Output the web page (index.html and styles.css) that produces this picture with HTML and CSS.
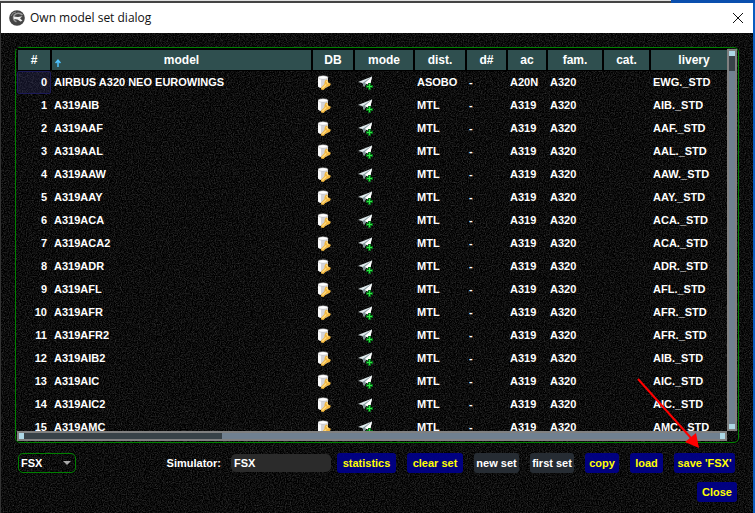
FILE: index.html
```html
<!DOCTYPE html>
<html lang="en">
<head>
<meta charset="utf-8">
<title>Own model set dialog</title>
<link rel="stylesheet" href="styles.css">
</head>
<body>
<svg class="defs" aria-hidden="true">
  <filter id="grain" x="0" y="0" width="100%" height="100%" color-interpolation-filters="sRGB">
    <feTurbulence type="fractalNoise" baseFrequency="0.83" numOctaves="4" seed="4"/>
    <feColorMatrix values="0.36 0 0 0 -0.13  0.36 0 0 0 -0.13  0.36 0 0 0 -0.13  0 0 0 0 1"/>
  </filter>
  <symbol id="db" viewBox="0 0 15 15">
    <path d="M0 2.500v8.500c0 1.200 2 2 5 2s5-.8 5-2V2.500z" fill="#d4d4d8"/>
    <path d="M0 3v8c0 .8 1.200 1.500 3 1.800V4z" fill="#fafafa"/>
    <ellipse cx="5" cy="2.500" rx="4.900" ry="1.800" fill="#fff" stroke="#aaa" stroke-width=".5"/>
    <path d="M3 12.800l3.500-3.800c-.3-2 .6-3.900 2-4.400l1.300.9v1.700l3 1.600c-.2 2.100-2 3.300-4.100 3L5.500 14.900l-2.500-.4z" fill="#f2b73f"/>
    <path d="M4.300 13.300l4-4M8.500 6l1.700 2.700" stroke="#ffe08a" stroke-width="1.200" fill="none"/>
  </symbol>
  <symbol id="plane" viewBox="0 0 15 15">
    <path d="M0 7L14 1.500 12 10 8 8.500 6 12 4.500 8z" fill="#dfeaec"/>
    <path d="M4.500 8L14 1.500 6 12z" fill="#84979c"/>
    <path d="M6.800 8L14 1.500 12 10.500z" fill="#fff"/>
    <path d="M11.500 8v7M8 11.500h7" stroke="#067018" stroke-width="3"/>
    <path d="M11.500 9v5M9 11.500h5" stroke="#2fe845" stroke-width="1"/>
  </symbol>
</svg>
<div class="desktop"><span></span></div>
<main class="window">
  <header class="titlebar">
    <svg class="logo" viewBox="0 0 16 16" aria-hidden="true">
      <circle cx="8" cy="8" r="7.800" fill="#444"/>
      <path d="M13.500 5C11 2.500 7 2.800 5.200 5.300c-1.600 2.400-.6 5.400 2.300 6.500" fill="none" stroke="#999" stroke-width="1.500"/>
      <path d="M4.500 6.500L9 7l4.500-.8-2.500 2 2.500 2.500-2 .8L8.500 9.500 5 9z" fill="#eee"/>
      <path d="M2 6l2-3 3-1" stroke="#888" fill="none"/>
    </svg>
    <h1>Own model set dialog</h1>
    <button class="close-x" aria-label="Close window"><svg viewBox="0 0 10 10" aria-hidden="true"><path d="M0 0l10 10M10 0L0 10"/></svg></button>
  </header>
  <div class="content">
    <svg class="grain" aria-hidden="true"><rect width="100%" height="100%" filter="url(#grain)"/></svg>
    <section class="panel">
      <div class="viewport">
        <table>
          <colgroup><col class="c-num"><col><col class="c-db"><col class="c-mode"><col class="c-dist"><col class="c-dn"><col class="c-ac"><col class="c-fam"><col class="c-cat"><col class="c-liv"></colgroup>
          <thead><tr><th>#</th><th class="sorted"><svg viewBox="0 0 6 8" aria-hidden="true"><path d="M3 8V2M.5 4L3 1.200 5.500 4"/></svg>model</th><th>DB</th><th>mode</th><th>dist.</th><th>d#</th><th>ac</th><th>fam.</th><th>cat.</th><th>livery</th></tr></thead>
          <tbody>
            <tr><td class="current">0</td><td>AIRBUS A320 NEO EUROWINGS</td><td><svg><use href="#db"/></svg></td><td><svg><use href="#plane"/></svg></td><td>ASOBO</td><td>-</td><td>A20N</td><td>A320</td><td></td><td>EWG._STD</td></tr>
            <tr><td>1</td><td>A319AIB</td><td><svg><use href="#db"/></svg></td><td><svg><use href="#plane"/></svg></td><td>MTL</td><td>-</td><td>A319</td><td>A320</td><td></td><td>AIB._STD</td></tr>
            <tr><td>2</td><td>A319AAF</td><td><svg><use href="#db"/></svg></td><td><svg><use href="#plane"/></svg></td><td>MTL</td><td>-</td><td>A319</td><td>A320</td><td></td><td>AAF._STD</td></tr>
            <tr><td>3</td><td>A319AAL</td><td><svg><use href="#db"/></svg></td><td><svg><use href="#plane"/></svg></td><td>MTL</td><td>-</td><td>A319</td><td>A320</td><td></td><td>AAL._STD</td></tr>
            <tr><td>4</td><td>A319AAW</td><td><svg><use href="#db"/></svg></td><td><svg><use href="#plane"/></svg></td><td>MTL</td><td>-</td><td>A319</td><td>A320</td><td></td><td>AAW._STD</td></tr>
            <tr><td>5</td><td>A319AAY</td><td><svg><use href="#db"/></svg></td><td><svg><use href="#plane"/></svg></td><td>MTL</td><td>-</td><td>A319</td><td>A320</td><td></td><td>AAY._STD</td></tr>
            <tr><td>6</td><td>A319ACA</td><td><svg><use href="#db"/></svg></td><td><svg><use href="#plane"/></svg></td><td>MTL</td><td>-</td><td>A319</td><td>A320</td><td></td><td>ACA._STD</td></tr>
            <tr><td>7</td><td>A319ACA2</td><td><svg><use href="#db"/></svg></td><td><svg><use href="#plane"/></svg></td><td>MTL</td><td>-</td><td>A319</td><td>A320</td><td></td><td>ACA._STD</td></tr>
            <tr><td>8</td><td>A319ADR</td><td><svg><use href="#db"/></svg></td><td><svg><use href="#plane"/></svg></td><td>MTL</td><td>-</td><td>A319</td><td>A320</td><td></td><td>ADR._STD</td></tr>
            <tr><td>9</td><td>A319AFL</td><td><svg><use href="#db"/></svg></td><td><svg><use href="#plane"/></svg></td><td>MTL</td><td>-</td><td>A319</td><td>A320</td><td></td><td>AFL._STD</td></tr>
            <tr><td>10</td><td>A319AFR</td><td><svg><use href="#db"/></svg></td><td><svg><use href="#plane"/></svg></td><td>MTL</td><td>-</td><td>A319</td><td>A320</td><td></td><td>AFR._STD</td></tr>
            <tr><td>11</td><td>A319AFR2</td><td><svg><use href="#db"/></svg></td><td><svg><use href="#plane"/></svg></td><td>MTL</td><td>-</td><td>A319</td><td>A320</td><td></td><td>AFR._STD</td></tr>
            <tr><td>12</td><td>A319AIB2</td><td><svg><use href="#db"/></svg></td><td><svg><use href="#plane"/></svg></td><td>MTL</td><td>-</td><td>A319</td><td>A320</td><td></td><td>AIB._STD</td></tr>
            <tr><td>13</td><td>A319AIC</td><td><svg><use href="#db"/></svg></td><td><svg><use href="#plane"/></svg></td><td>MTL</td><td>-</td><td>A319</td><td>A320</td><td></td><td>AIC._STD</td></tr>
            <tr><td>14</td><td>A319AIC2</td><td><svg><use href="#db"/></svg></td><td><svg><use href="#plane"/></svg></td><td>MTL</td><td>-</td><td>A319</td><td>A320</td><td></td><td>AIC._STD</td></tr>
            <tr><td>15</td><td>A319AMC</td><td><svg><use href="#db"/></svg></td><td><svg><use href="#plane"/></svg></td><td>MTL</td><td>-</td><td>A319</td><td>A320</td><td></td><td>AMC._STD</td></tr>
          </tbody>
        </table>
      </div>
      <div class="bar vertical"><i class="cap"></i><i class="thumb"></i><i class="track"></i><i class="cap"></i></div>
      <div class="bar horizontal"><i class="cap"></i><i class="thumb"></i><i class="track"></i><i class="cap"></i></div>
    </section>
    <div class="actions">
      <div class="picker">
        <select aria-label="Model set simulator"><option>FSX</option></select>
        <svg viewBox="0 0 8 4" aria-hidden="true"><path d="M0 0h8L4 4z"/></svg>
      </div>
      <label for="sim">Simulator:</label>
      <input id="sim" type="text" value="FSX" readonly>
      <div class="buttons">
        <button>statistics</button>
        <button>clear set</button>
        <button disabled>new set</button>
        <button disabled>first set</button>
        <button>copy</button>
        <button>load</button>
        <button>save 'FSX'</button>
      </div>
    </div>
    <div class="dismiss"><button>Close</button></div>
    <svg class="pointer" viewBox="0 0 64 72" aria-hidden="true"><path d="M1 1L54 60" stroke="#f00" stroke-width="2"/><path d="M62 70L48 64 59 55z" fill="#f00"/></svg>
  </div>
</main>
</body>
</html>
```
FILE: styles.css
```css
* { box-sizing: border-box; }

body {
  margin: 0;
  height: 100vh;
  display: flex;
  flex-direction: column;
  overflow: hidden;
  background: #333;
  color: #fff;
  font: bold 11px/14px "Liberation Sans", Arial, sans-serif;
}

.defs { position: absolute; width: 0; height: 0; }

.desktop { flex: none; display: flex; justify-content: flex-end; height: 3px; background: #444; border-top: 1px solid #dedede; }
.desktop span { width: 84px; margin-top: -1px; background: #0a4fae; }

.window {
  flex: 1;
  min-height: 0;
  display: flex;
  flex-direction: column;
  border-left: 1px solid #333;
  border-right: 2px solid #0a5cc0;
}

.titlebar {
  flex: none;
  display: flex;
  align-items: center;
  gap: 5px;
  height: 30px;
  padding: 0 10px 0 8px;
  background: #fff;
  color: #111;
}
.logo { width: 16px; height: 16px; }
.titlebar h1 { flex: 1; margin: 0; font: 12px/16px "Open Sans", "Noto Sans", sans-serif; }
.close-x { display: flex; padding: 0; border: 0; background: none; }
.close-x svg { width: 10px; height: 10px; overflow: visible; stroke: #111; }

.content {
  position: relative;
  flex: 1;
  min-height: 0;
  display: flex;
  flex-direction: column;
  padding: 14px 14px 11px;
  background: #080808;
}
.content > * { position: relative; }
.content > .grain { position: absolute; inset: 0; width: 100%; height: 100%; }

.panel {
  flex: 1;
  min-height: 0;
  display: grid;
  grid-template: minmax(0, 1fr) 10px / minmax(0, 1fr) 10px;
  padding: 0 1px 1px;
  border: 1px solid #008000;
  border-radius: 5px;
}
.viewport { overflow: hidden; }

table { width: 100%; table-layout: fixed; border-collapse: separate; border-spacing: 0; }
.c-num { width: 34px; }
.c-db { width: 42px; }
.c-mode { width: 60px; }
.c-dist { width: 52px; }
.c-dn { width: 41px; }
.c-ac { width: 40px; }
.c-fam { width: 56px; }
.c-cat { width: 47px; }
.c-liv { width: 77px; }

th {
  height: 23px;
  padding: 0;
  border: 1px solid #000;
  border-top-width: 2px;
  background: #2f4f4f;
  font-size: 12px;
}
th:last-child { padding-left: 10px; border-right: 0; }
.sorted { position: relative; }
.sorted svg { position: absolute; left: 3px; bottom: 3px; width: 6px; height: 8px; fill: none; stroke: #4fc3ff; stroke-width: 1.5; }

td { height: 23px; padding: 0 3px 2px; white-space: nowrap; }
td:first-child { padding-right: 4px; text-align: right; }
td:nth-child(3) { padding: 0 6px; }
td:nth-child(4) { padding: 0 4px; }
td svg { display: block; width: 15px; height: 15px; }
td.current { border: 1px solid #1c1a58; border-radius: 2px; padding-right: 3px; background: rgba(50, 50, 110, .3); }

.bar { display: flex; padding: 2px; background: #808080; }
.bar .cap { flex: none; width: 5px; height: 6px; background: #add8e6; }
.bar .thumb { flex: none; background: #384248; }
.bar .track { flex: 1; background: #708090; }
.vertical { flex-direction: column; margin-top: 1px; }
.vertical .cap { width: 6px; height: 5px; }
.vertical .thumb { height: 15px; }
.horizontal .thumb { width: 28%; }

.actions { flex: none; display: flex; align-items: center; margin-top: 10px; padding: 0 4px 0 3px; }
.picker { position: relative; width: 58px; margin-right: auto; }
select, input, button { font: inherit; color: inherit; }
select {
  display: block;
  width: 100%;
  height: 20px;
  padding: 0 2px;
  appearance: none;
  border: 1px solid #008000;
  border-radius: 5px;
  background: transparent;
}
.picker svg { position: absolute; right: 5px; top: 8px; width: 8px; height: 4px; fill: #aaa; }
input { width: 100px; height: 18px; margin: 0 6px 0 10px; padding: 0 3px; border: 0; border-radius: 5px; background: #2b2b2b; }

.buttons { display: grid; grid-template-columns: 59px 56px 45px 44px 34px 33px 61px; gap: 11px; }
button { white-space: nowrap; }
.buttons button, .dismiss button {
  height: 20px;
  padding: 0;
  border: 0;
  border-radius: 3px;
  background: rgba(0, 0, 139, .92);
  color: #ff0;
}
.buttons button:disabled { background: #262c33; color: #fff; }
.dismiss { flex: none; display: flex; justify-content: flex-end; margin-top: 9px; padding-right: 2px; }
.dismiss button { width: 40px; }

.content > .pointer { position: absolute; right: 52px; bottom: 63px; width: 64px; height: 72px; pointer-events: none; }
```
